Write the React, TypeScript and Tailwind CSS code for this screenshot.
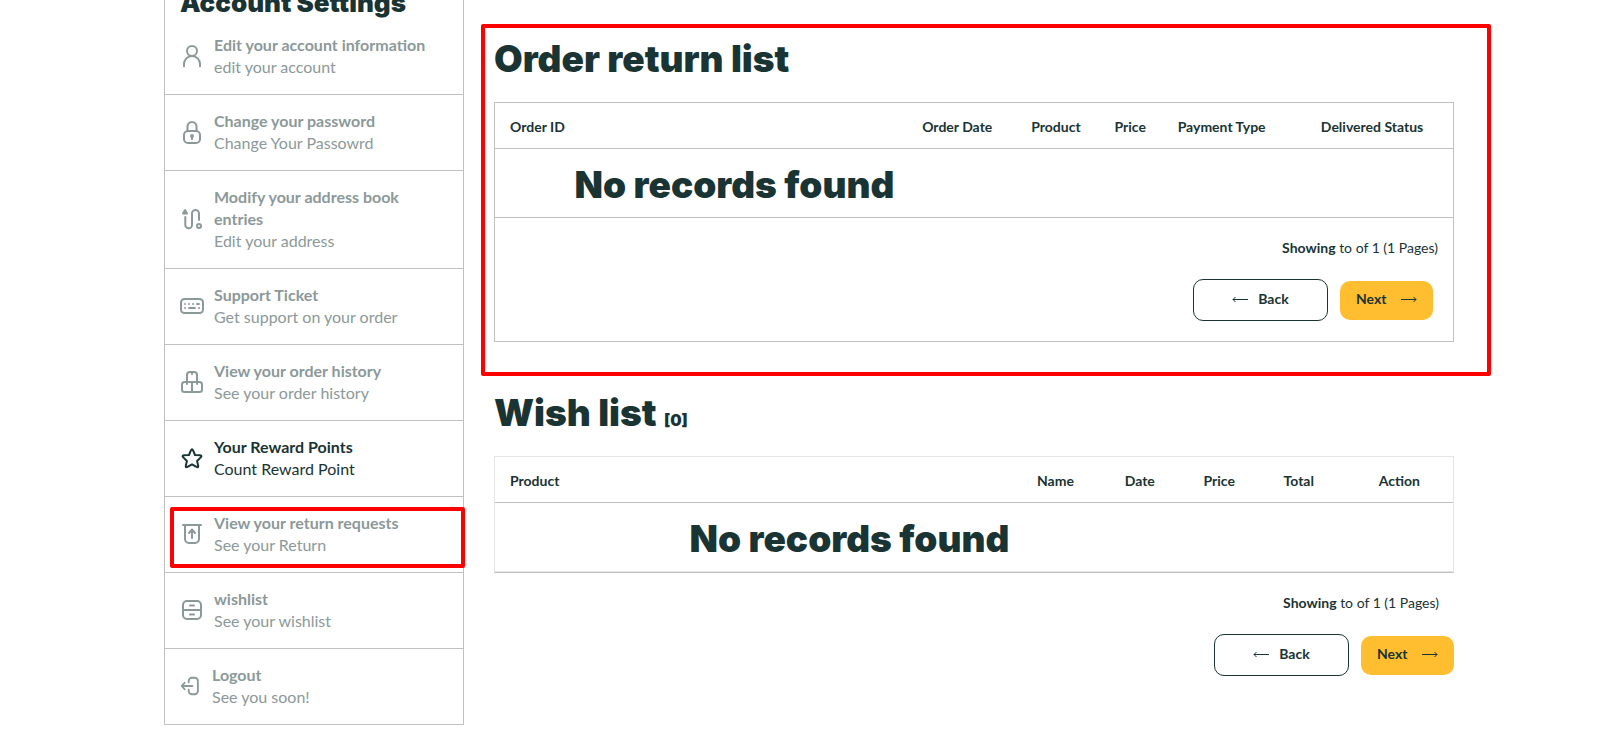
import type { ReactNode } from 'react';
import clsx from 'clsx';

interface MenuItem {
    title: string;
    subtitle: string;
    icon: ReactNode;
    active?: boolean;
    marked?: boolean;
    iconSize?: string;
}

interface Column {
    label: string;
    width: string;
}

interface RecordsTableProps {
    columns: Column[];
    messageWidth: string;
    rowBorder: string;
}

const Icon = ({ children }: { children: ReactNode }) => (
    <svg
        viewBox="0 0 24 24"
        className="w-full h-6"
        fill="none"
        stroke="currentColor"
        strokeWidth="2"
        strokeLinecap="round"
        strokeLinejoin="round"
        aria-hidden="true"
    >
        {children}
    </svg>
);

const menu: MenuItem[] = [
    {
        title: 'Edit your account information',
        subtitle: 'edit your account',
        icon: (
            <Icon>
                <circle cx="12" cy="7" r="5" />
                <path d="M4 23v-3a8 8 0 0 1 16 0v3" strokeLinecap="butt" />
            </Icon>
        ),
    },
    {
        title: 'Change your password',
        subtitle: 'Change Your Passowrd',
        icon: (
            <Icon>
                <rect x="4" y="11" width="16" height="12" rx="4" />
                <path d="M7.5 11V6.5a4.5 4.5 0 0 1 9 0V11" />
                <circle cx="12" cy="16" r="1" fill="currentColor" />
                <path d="M12 16.5V19" />
            </Icon>
        ),
    },
    {
        title: 'Modify your address book entries',
        subtitle: 'Edit your address',
        icon: (
            <Icon>
                <path d="M5 3 3 6.5h4z" fill="currentColor" />
                <path d="M5.3 10v8a3.3 3.3 0 0 0 6.7 0V6.5a3.4 3.4 0 0 1 7 0V13" />
                <circle cx="19" cy="19" r="2" />
            </Icon>
        ),
    },
    {
        title: 'Support Ticket',
        subtitle: 'Get support on your order',
        icon: (
            <Icon>
                <rect x="1" y="5" width="22" height="14" rx="3.5" />
                <path d="M5 10h.1M9 10h.1M13 10h.1M17 10h2M5 14h.1M9 14h6M19 14h.1" strokeWidth="1.8" />
            </Icon>
        ),
    },
    {
        title: 'View your order history',
        subtitle: 'See your order history',
        icon: (
            <Icon>
                <path d="M7 12V5a3 3 0 0 1 3-3h4a3 3 0 0 1 3 3v7M12 2v2" />
                <rect x="2" y="12" width="20" height="10" rx="2.5" />
                <path d="M12 12v10M7 12v2M17 12v2" />
            </Icon>
        ),
    },
    {
        title: 'Your Reward Points',
        subtitle: 'Count Reward Point',
        active: true,
        icon: (
            <Icon>
                <path d="M10.9 4.4Q12 2.2 13.1 4.4L15 9l5 .3q2.5.3.7 2.1L17.1 15l1.1 4.7q.4 2.3-1.7 1.2L12 18.3l-4.5 2.6q-2.1 1.1-1.7-1.2L6.9 15l-3.6-3.6q-1.8-1.8.7-2.1L9 9z" />
            </Icon>
        ),
    },
    {
        title: 'View your return requests',
        subtitle: 'See your Return',
        marked: true,
        icon: (
            <Icon>
                <path d="M3 3h18M5 3v14a4 4 0 0 0 4 4h6a4 4 0 0 0 4-4V3" />
                <path d="M12 16V8M9 11l3-3.5 3 3.5" />
            </Icon>
        ),
    },
    {
        title: 'wishlist',
        subtitle: 'See your wishlist',
        icon: (
            <Icon>
                <rect x="3" y="3" width="18" height="18" rx="4" />
                <path d="M3 12h18M10 7.5h4M10 16.5h4" />
            </Icon>
        ),
    },
    {
        title: 'Logout',
        subtitle: 'See you soon!',
        iconSize: 'w-[22px]',
        icon: (
            <Icon>
                <path d="M9.5 8V6.5A3.5 3.5 0 0 1 13 3h3a3.5 3.5 0 0 1 3.5 3.5v11A3.5 3.5 0 0 1 16 21h-3a3.5 3.5 0 0 1-3.5-3.5V16" />
                <path d="M13.5 12H2M5 8.5 1.8 12 5 15.5" />
            </Icon>
        ),
    },
];

const orderColumns: Column[] = [
    { label: 'Order ID', width: 'w-[43.4%]' },
    { label: 'Order Date', width: 'w-[9.7%]' },
    { label: 'Product', width: 'w-[10.9%]' },
    { label: 'Price', width: 'w-[4.6%]' },
    { label: 'Payment Type', width: 'w-[14.5%]' },
    { label: 'Delivered Status', width: 'w-[16.9%]' },
];

const wishColumns: Column[] = [
    { label: 'Product', width: 'w-[54.6%]' },
    { label: 'Name', width: 'w-[7.8%]' },
    { label: 'Date', width: 'w-[9.8%]' },
    { label: 'Price', width: 'w-[6.8%]' },
    { label: 'Total', width: 'w-[9.8%]' },
    { label: 'Action', width: 'w-[11.2%]' },
];

const Sidebar = () => (
    <aside className="w-1/4 px-[15px]">
        <div className="border-x border-b border-[#c1c1c1]">
            <h2 className="-mt-[9px] mb-1 px-[15px] font-['Inter',sans-serif] text-[26px] leading-6 font-black whitespace-nowrap">
                Account Settings
            </h2>
            <ul className="divide-y divide-[#c1c1c1]">
                {menu.map((item) => (
                    <li key={item.title} className="relative">
                        <a
                            href="#"
                            className={clsx(
                                'flex items-center gap-[10px] px-[15px] pt-[15px] pb-4 leading-[22px]',
                                item.active ? 'text-[#1a3333]' : 'text-[#8c9999]',
                            )}
                        >
                            <span className={clsx('shrink-0', item.iconSize ?? 'w-6')}>{item.icon}</span>
                            <span>
                                <span className="block font-bold">{item.title}</span>
                                <span className="block">{item.subtitle}</span>
                            </span>
                        </a>
                        {item.marked && (
                            <div className="absolute top-[10px] -right-[2px] bottom-1 left-[5px] border-4 border-[#fe0000] rounded-xs pointer-events-none" />
                        )}
                    </li>
                ))}
            </ul>
        </div>
    </aside>
);

const RecordsTable = ({ columns, messageWidth, rowBorder }: RecordsTableProps) => (
    <table className="w-full table-fixed border-separate border-spacing-0">
        <thead>
            <tr>
                {columns.map((column, i) => (
                    <th
                        key={column.label}
                        scope="col"
                        className={clsx(
                            'h-[46px] pt-[3px] border-b border-[#c1c1c1] text-sm font-bold whitespace-nowrap',
                            column.width,
                            i === 0 ? 'pl-[15px] text-left' : 'text-center',
                        )}
                    >
                        {column.label}
                    </th>
                ))}
            </tr>
        </thead>
        <tbody>
            <tr>
                <td colSpan={columns.length} className={clsx('h-[69px] pt-1 border-b', rowBorder)}>
                    <h3
                        className={clsx(
                            "text-center font-['Inter',sans-serif] text-[37px] leading-10 font-black whitespace-nowrap",
                            messageWidth,
                        )}
                    >
                        No records found
                    </h3>
                </td>
            </tr>
        </tbody>
    </table>
);

const PageSummary = () => (
    <p className="pt-5 pr-[15px] text-right text-sm leading-5">
        <b>Showing</b> to of 1 (1 Pages)
    </p>
);

const PagerButtons = () => (
    <div className="flex items-center justify-end gap-3 pt-[21px] text-sm font-bold">
        <button
            type="button"
            className="flex items-center justify-center gap-[10px] w-[135px] h-[42px] pb-[2px] border border-[#1a3333] rounded-[10px]"
        >
            <svg viewBox="0 0 16 8" className="w-4 h-2" fill="none" stroke="currentColor" aria-hidden="true">
                <path d="M16 4.5H1M3.5 2 1 4.5 3.5 7" />
            </svg>
            Back
        </button>
        <button
            type="button"
            className="flex items-center justify-between w-[93px] h-[39px] px-4 pb-[2px] bg-[#ffbd30] rounded-[10px]"
        >
            Next
            <svg viewBox="0 0 16 8" className="w-4 h-2" fill="none" stroke="currentColor" aria-hidden="true">
                <path d="M0 4.5h15M12.5 2 15 4.5 12.5 7" />
            </svg>
        </button>
    </div>
);

const App = () => {
    return (
        <div className="overflow-hidden bg-white pl-[14px] font-['Lato',sans-serif] text-base text-[#1a3333]">
            <div className="flex items-start max-w-[1320px] mx-auto">
                <Sidebar />

                <main className="w-3/4 px-[15px] pt-[39px]">
                    <section className="relative">
                        <h1 className="mb-[23px] font-['Inter',sans-serif] text-[37px] leading-10 font-black">
                            Order return list
                        </h1>
                        <div className="border border-[#c1c1c1]">
                            <RecordsTable
                                columns={orderColumns}
                                messageWidth="w-1/2"
                                rowBorder="border-[#c1c1c1]"
                            />
                            <PageSummary />
                            <div className="pr-5 pb-5">
                                <PagerButtons />
                            </div>
                        </div>
                        {/* Highlight frame */}
                        <div className="absolute -top-[15px] -right-[37px] -bottom-[34px] -left-[13px] border-4 border-[#fe0000] rounded-xs pointer-events-none" />
                    </section>

                    <section className="mt-[51px]">
                        <h1 className="mb-[23px] font-['Inter',sans-serif] text-[37px] leading-10 font-black">
                            Wish list <span className="text-base">[0]</span>
                        </h1>
                        <div className="border border-[#e5e5e5] border-b-[#c1c1c1]">
                            <RecordsTable
                                columns={wishColumns}
                                messageWidth="w-[74%]"
                                rowBorder="border-[#e5e5e5]"
                            />
                        </div>
                        <PageSummary />
                        <PagerButtons />
                    </section>
                </main>
            </div>
        </div>
    );
};

export default App;
